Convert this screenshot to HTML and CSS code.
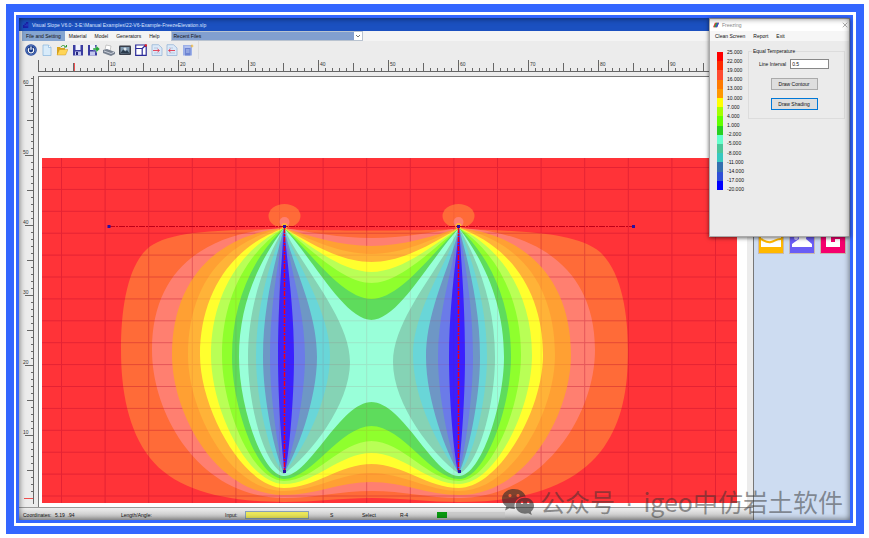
FILE: index.html
```
<!DOCTYPE html>
<html lang="en">
  <head>
    <meta charset="UTF-8" />
    <meta name="viewport" content="width=device-width, initial-scale=1.0" />
    <title>Visual Slope V6.0</title>
    <link rel="stylesheet" href="styles.css">
  </head>
  <body>
    <div class="frame">
      <div class="window">
        <header class="titlebar">
          <svg class="app-icon" viewBox="0 0 8 8"><path d="M0 8V4h2V2h2V0h3v8z" fill="#1a1fa8" /><path d="M4 3h3M2 5h5" stroke="#2b45c8" /></svg>
          <span>Visual Slope V6.0- 3-E:\Manual Examples\22-V6-Example-FreezeElevation.slp</span>
        </header>

        <div class="columns">
          <main class="main">
            <nav class="menubar">
              <button class="menu-item active">File and Setting</button>
              <button class="menu-item">Material</button>
              <button class="menu-item">Model</button>
              <button class="menu-item">Generators</button>
              <button class="menu-item">Help</button>
              <div class="recent">
                <select aria-label="Recent Files"><option>Recent Files</option></select>
                <svg viewBox="0 0 8 8"><path d="M2 3l2 2 2-2" fill="none" stroke="#777" /></svg>
              </div>
            </nav>

            <div class="toolbar">
              <button aria-label="Power"><svg viewBox="0 0 12 12"><circle cx="6" cy="6" r="5.8" fill="#24469c" /><circle cx="6" cy="6" r="4.6" fill="#1b3a86" stroke="#7ea4e0" stroke-width=".5" /><path d="M4.2 4.2a2.7 2.7 0 1 0 3.6 0M6 2.6v3.2" fill="none" stroke="#fff" stroke-width="1.2" /></svg></button>
              <button aria-label="New"><svg viewBox="0 0 12 12"><path d="M2 1h5.5L10 3.500V11.500H2z" fill="#d8ebfa" stroke="#86b4dc" stroke-width=".7" /><path d="M7.500 1v2.500H10" fill="#fff" stroke="#86b4dc" stroke-width=".7" /></svg></button>
              <button aria-label="Open"><svg viewBox="0 0 12 12"><path d="M1 3h3l1 1h4v7H1z" fill="#d8a21c" /><path d="M1 11l2.500-5.500H12L9.500 11z" fill="#ffd557" stroke="#c08a10" stroke-width=".4" /><path d="M5 3c1-2 3.500-2 4.500 0M8 3h2.500V1" fill="none" stroke="#2f9a35" stroke-width="1" /></svg></button>
              <button aria-label="Save"><svg viewBox="0 0 12 12"><path d="M1 1h10v10.500H1z" fill="#3a3ca0" /><path d="M3.500 1h5v5h-5z" fill="#f0f2ff" /><path d="M3 7.500h6v4H3z" fill="#c3c8ee" /><path d="M4 8h2v3H4z" fill="#25277d" /></svg></button>
              <button aria-label="Save as"><svg viewBox="0 0 12 12"><path d="M0 1h9v10.500H0z" fill="#3a3ca0" /><path d="M2 1h5v5H2z" fill="#f0f2ff" /><path d="M2 7.500h5v4H2z" fill="#c3c8ee" /><path d="M5 4h3V1.500L12 5 8 8.500V6H5z" fill="#23a338" stroke="#fff" stroke-width=".4" /></svg></button>
              <button aria-label="Print"><svg viewBox="0 0 12 12"><path d="M3 1l5 1-1 5-5-1z" fill="#fff" stroke="#999" stroke-width=".5" /><path d="M0 6l4-1 8 3v2l-4 2-8-3z" fill="#77808f" /><path d="M1 7l7 2.500 3-1.200" fill="none" stroke="#dde2ec" stroke-width=".8" /></svg></button>
              <button aria-label="Image"><svg viewBox="0 0 12 12"><rect y="1.500" width="12" height="9.500" rx="1" fill="#3a3f4b" /><path d="M1.500 3h9v6.500h-9z" fill="#7f98ae" /><path d="M1.500 9l3-4 2 2.500L8 6l2.500 3.500z" fill="#2a3a4c" /><circle cx="6" cy="5" r="1.500" fill="#dbe5ec" /></svg></button>
              <button aria-label="Zoom extents"><svg viewBox="0 0 12 12"><path d="M.7 1h10.500v10.400H.7zM.7 4.500h6.500v7M7.200 4.500L11 1" fill="#fff" stroke="#2a2a98" stroke-width="1.200" /><circle cx="10.800" cy="1.400" r="1.200" fill="#e22" /></svg></button>
              <button aria-label="Import"><svg viewBox="0 0 12 12"><path d="M1 .7h6.500L11 4v7.500H1z" fill="#dce9f8" stroke="#8eafd4" stroke-width=".7" /><path d="M3 4h4M3 9h6" stroke="#9bb3d0" stroke-width=".6" /><path d="M2 6.500h6M6.500 5l2 1.500-2 1.500" fill="none" stroke="#e0354d" stroke-width=".9" /></svg></button>
              <button aria-label="Export"><svg viewBox="0 0 12 12"><path d="M1 .7h6.500L11 4v7.500H1z" fill="#dce9f8" stroke="#8eafd4" stroke-width=".7" /><path d="M3 4h4M3 9h6" stroke="#9bb3d0" stroke-width=".6" /><path d="M9 6.500H3M4.500 5l-2 1.500 2 1.500" fill="none" stroke="#e0354d" stroke-width=".9" /></svg></button>
              <button aria-label="Report"><svg viewBox="0 0 12 12"><path d="M1 1h9v10.500H1z" fill="#9db0e8" /><path d="M3 4h5.500v7.500H3z" fill="#6d84d2" /><path d="M2.500 3h6M4 6h3.500M4 8h3.500" stroke="#dbe5fc" stroke-width=".7" /><path d="M10 0l.6 1.400L12 2l-1.400.6L10 4l-.6-1.400L8 2l1.400-.6z" fill="#f0b93c" /></svg></button>
            </div>

            <svg class="ruler-h" aria-hidden="true">
              <defs>
                <pattern id="ticks-h" width="70" height="17" patternUnits="userSpaceOnUse">
                  <path d="M.5 1V12M35.500 4V12M7.500 9V12M14.500 9V12M21.500 9V12M28.500 9V12M42.500 9V12M49.500 9V12M56.500 9V12M63.500 9V12M0 12.500H70" stroke="#666" />
                </pattern>
              </defs>
              <rect width="100%" height="17" fill="url(#ticks-h)" />
              <path d="M36.500 4V12" stroke="#f05050" />
              <text x="72" y="7">10</text><text x="142" y="7">20</text><text x="212" y="7">30</text>
              <text x="282" y="7">40</text><text x="352" y="7">50</text><text x="422" y="7">60</text>
              <text x="492" y="7">70</text><text x="562" y="7">80</text><text x="632" y="7">90</text>
            </svg>

            <div class="workspace">
              <svg class="ruler-v" aria-hidden="true">
                <defs>
                  <pattern id="ticks-v" y="9" width="19" height="70" patternUnits="userSpaceOnUse">
                    <path d="M6 .5H14M8 35.500H14M12 7.500H14M12 14.500H14M12 21.500H14M12 28.500H14M12 42.500H14M12 49.500H14M12 56.500H14M12 63.500H14M14.500 0V70" stroke="#666" />
                  </pattern>
                </defs>
                <rect width="19" height="428" fill="url(#ticks-v)" />
                <path d="M5 422.500H14" stroke="#f05050" />
                <text x="4" y="8">60</text><text x="4" y="78">50</text><text x="4" y="148">40</text>
                <text x="4" y="218">30</text><text x="4" y="288">20</text><text x="4" y="358">10</text>
              </svg>

              <div class="canvas">
                <svg class="field" viewBox="42 158 695 345" preserveAspectRatio="none" role="img" aria-label="Temperature shading">
                  <defs>
                    <pattern id="grid" x="61" y="167" width="43.600" height="21.900" patternUnits="userSpaceOnUse">
                      <path d="M0 .5H43.600M.5 0V21.900" stroke="#b00028" stroke-width="1" />
                    </pattern>
                    <g id="half">
                      <path fill="#ffa033" d="M284 228C222 234 172 275 172 355C172 412 215 495 284 495C315 495 340 482 372 482V246C340 246 310 236 284 228" />
                      <path fill="#ffb338" d="M284 228C226 240 188 283 188 355C188 411 230 491 284 491C315 491 340 473 372 473V254C340 254 310 239 284 228" />
                      <path fill="#ffff2e" d="M284 228C230 247 200 295 200 355C200 410 244 488 284 488C315 488 340 464 372 464V262C340 262 310 243 284 228" />
                      <path fill="#b9ff56" d="M284 228C238 250 211 298 211 355C211 410 248 484 284 484C315 484 340 453 372 453V272C342 272 311 246 284 228" />
                      <path fill="#8fff2d" d="M284 228C245 254 222 300 222 355C222 408 252 481 284 481C315 481 340 441 372 441V283C343 283 312 250 284 228" />
                      <path fill="#5edc5c" d="M284 228C252 258 232 303 232 357C232 406 257 479 284 479C312 479 340 426 372 426V299C343 299 313 255 284 228" />
                      <path fill="#99ffd9" d="M284 228C258 262 239 305 239 357C239 405 262 476 284 476C310 476 340 402 372 402V320C345 320 315 262 284 228" />
                      <path fill="#85d3b5" d="M284 228C262 265 248 310 248 357C248 405 264 465 284 474C310 455 350 405 350 362C350 318 300 265 284 228" />
                      <path fill="#69d6d8" d="M284 228C268 265 256 310 256 357C256 400 270 460 284 473C303 450 330 400 330 355C330 310 295 262 284 228" />
                      <path fill="#6e97c5" d="M284 228C273 268 263 310 263 357C263 400 275 455 284 473C296 455 317 400 317 357C317 310 293 268 284 228" />
                      <path fill="#6b7be8" d="M284 228C277 268 270 310 270 357C270 400 279 455 284 473C292 455 305 400 305 357C305 310 290 268 284 228" />
                      <path fill="#3a20ff" d="M284 228C281 268 278 310 278 357C278 400 282 455 285 472C289 455 294 400 294 357C294 310 288 268 284 228" />
                      <ellipse cx="284.500" cy="216" rx="16" ry="12" fill="#ff6b38" />
                      <circle cx="284.500" cy="222" r="5" fill="#ff7f70" />
                      <circle cx="284.500" cy="226" r="3" fill="#ffb338" />
                    </g>
                  </defs>
                  <rect x="42" y="158" width="695" height="345" fill="#ff3338" />
                  <path fill="#ff6b38" d="M284 229C215 230 165 231 146 250S121 310 121 350C121 390 128 430 150 458C175 490 225 502 284 502C315 502 340 498 372 498C403 498 428 502 459 502C520 502 575 488 604 447C622 421 628 390 628 350C628 315 622 272 600 252C576 232 520 231 459 229C420 231 320 231 284 229" />
                  <path fill="#ff7f70" d="M284 228C215 231 152 262 152 350C152 415 200 498 284 498C315 498 340 491 372 491C403 491 428 498 459 498C543 498 595 415 595 350C595 262 528 231 459 228C433 232 403 238 372 238C340 238 310 232 284 228" />
                  <rect x="42" y="158" width="695" height="345" fill="url(#grid)" opacity=".25" />
                  <use href="#half" />
                  <use href="#half" transform="matrix(-1 0 0 1 743 0)" />
                  <rect x="42" y="158" width="695" height="345" fill="url(#grid)" opacity=".1" />
                  <path d="M109 226.500H634" stroke="#c00018" stroke-dasharray="6 1 2 1" />
                  <path d="M284.500 228V472M458.500 228V472" stroke="#f00018" stroke-width="1.500" stroke-dasharray="5 1 2 1" />
                  <path d="M107.500 225h3v3h-3zM632 225h3v3h-3zM283 225h3v3h-3zM457 225h3v3h-3zM283 470h3v3h-3zM458 470h3v3h-3z" fill="#2b10a0" />
                </svg>
              </div>
            </div>

            <footer class="status">
              <span>Coordinates:</span>
              <span>5.19&nbsp; .94</span>
              <span>Length/Angle:</span>
              <label for="cmd">Input:</label>
              <input id="cmd" type="text" class="cmd">
              <span>S</span>
              <span>Select</span>
              <span>R-4</span>
              <div class="progress"><div class="bar"></div></div>
            </footer>
          </main>

          <aside class="side">
            <button class="tile yellow" aria-label="Slope"><svg viewBox="0 0 24 24"><path d="M2 3h20v15H2z" fill="#fff" /><path d="M2 10c4 2 6 4 10 3s5-3 10-3" fill="none" stroke="#ffb800" stroke-width="2" /></svg></button>
            <button class="tile violet" aria-label="Pile"><svg viewBox="0 0 24 24"><path d="M8 3h9l-1 7 6 5v3H2v-3l7-5z" fill="#fff" /><circle cx="6" cy="9" r="2" fill="#c9c3ff" /></svg></button>
            <button class="tile pink" aria-label="Wall"><svg viewBox="0 0 24 24"><path d="M5 3h5v10h4v-3h5v8H5z" fill="#fff" /></svg></button>
          </aside>
        </div>

        <section class="dialog" aria-label="Freezing">
          <div class="dialog-title">
            <svg viewBox="0 0 8 8"><path d="M2.500 1H8L5.500 7H0z" fill="#e33" /><path d="M4 1h2L3.500 7h-2z" fill="#2aa84a" /><path d="M6 1h2L5.500 7h-2z" fill="#2257d8" /></svg>
            <span>Freezing</span>
            <button class="close" aria-label="Close"><svg viewBox="0 0 8 8"><path d="M1 1l6 6M7 1L1 7" stroke="#777" stroke-width=".8" /></svg></button>
          </div>
          <nav class="dialog-menu">
            <button>Clean Screen</button>
            <button>Report</button>
            <button>Exit</button>
          </nav>
          <div class="dialog-body">
            <div class="legend-bar">
              <i class="c1"></i><i class="c2"></i><i class="c3"></i><i class="c4"></i><i class="c5"></i>
              <i class="c6"></i><i class="c7"></i><i class="c8"></i><i class="c9"></i><i class="c10"></i>
              <i class="c11"></i><i class="c12"></i><i class="c13"></i><i class="c14"></i><i class="c15"></i>
            </div>
            <ul class="legend-labels">
              <li>25.000</li><li>22.000</li><li>19.000</li><li>16.000</li>
              <li>13.000</li><li>10.000</li><li>7.000</li><li>4.000</li>
              <li>1.000</li><li>-2.000</li><li>-5.000</li><li>-8.000</li>
              <li>-11.000</li><li>-14.000</li><li>-17.000</li><li>-20.000</li>
            </ul>
            <fieldset class="group">
              <legend>Equal Temperature</legend>
              <div class="field-row">
                <label for="interval">Line Interval</label>
                <input id="interval" type="text" value="0.5">
              </div>
              <button class="btn">Draw Contour</button>
              <button class="btn focused">Draw Shading</button>
            </fieldset>
          </div>
        </section>
      </div>
    </div>

    <div class="watermark">
      <svg viewBox="0 0 32 26"><path fill-rule="evenodd" d="M12 0C5 0 0 4.500 0 10c0 3 1.700 5.700 4.300 7.500L3 21.500l4.500-2.300c1.400.4 3 .7 4.500.7h1C11 13 16 7.500 23.700 7.500C22.500 3 17.700 0 12 0zM8 5a1.600 1.600 0 1 1 0 3.200A1.600 1.600 0 0 1 8 5zm8 0a1.600 1.600 0 1 1 0 3.200A1.600 1.600 0 0 1 16 5z" /><path fill-rule="evenodd" d="M23 8.700c-5.300 0-9.300 3.500-9.300 8s4 8 9.300 8c1.200 0 2.300-.2 3.300-.5l3.500 1.800-1-3.200c2-1.500 3.200-3.700 3.200-6.100 0-4.500-4-8-9-8zM20 12.500a1.300 1.300 0 1 1 0 2.600 1.300 1.300 0 0 1 0-2.600zm6.200 0a1.300 1.300 0 1 1 0 2.600 1.300 1.300 0 0 1 0-2.600z" /></svg>
      <p><span>公众号</span><span class="dot">·</span><span>igeo中仿岩土软件</span></p>
    </div>
  </body>
</html>
```
FILE: styles.css
```
* {
  box-sizing: border-box;
}
body {
  margin: 0;
  padding: 4px 5px 4px 6px;
  height: 100vh;
  background: #fff;
  font-family: "Liberation Sans", Arial, sans-serif;
  font-size: 5px;
  line-height: 8px;
  color: #111;
}
button,
input,
select {
  font: inherit;
  color: inherit;
  margin: 0;
  padding: 0;
  border: 0;
  background: none;
}
svg {
  display: block;
}
.frame {
  height: 100%;
  border: 8px solid #3366ff;
  padding: 3px 3px 3px 2px;
}
.window {
  position: relative;
  height: 100%;
  border: 3px solid #3366ff;
  display: flex;
  flex-direction: column;
}
.window::after {
  content: "";
  position: absolute;
  inset: 0;
  box-shadow: inset 0 0 6px rgba(0, 0, 0, 0.6);
  pointer-events: none;
}
.titlebar {
  display: flex;
  align-items: center;
  gap: 3px;
  height: 13px;
  padding-left: 4px;
  background: #1b50c0;
  color: #dbe6ff;
}
.app-icon {
  width: 6px;
  height: 8px;
}
.columns {
  flex: 1;
  min-height: 0;
  display: flex;
}
.main {
  flex: 1;
  min-width: 0;
  display: flex;
  flex-direction: column;
  background: #ececec;
}

/* menu and tools */
.menubar {
  display: flex;
  height: 10px;
  padding-left: 3px;
  background: #f4f4f4;
}
.menu-item {
  padding: 0 4px;
}
.menu-item.active {
  background: #86a5d0;
}
.recent {
  display: flex;
  width: 192px;
  margin-left: 8px;
  border: 1px solid #b9c3d0;
  background: #fff;
}
.recent select {
  flex: 1;
  appearance: none;
  padding-left: 1px;
  line-height: 8px;
  background: #829fcf;
}
.recent svg {
  width: 8px;
  height: 8px;
}
.toolbar {
  display: grid;
  grid-template-columns: repeat(11, 1fr);
  align-items: center;
  justify-items: center;
  width: 180px;
  height: 18px;
  padding: 0 2px 0 4px;
  border-right: 1px solid #ddd;
}
.toolbar svg {
  width: 12px;
  height: 12px;
}

/* rulers and drawing area */
.ruler-h {
  width: calc(100% - 19px);
  height: 17px;
  margin-left: 19px;
}
.ruler-h text,
.ruler-v text {
  fill: #333;
}
.workspace {
  flex: 1;
  min-height: 0;
  display: flex;
}
.ruler-v {
  width: 19px;
  height: 100%;
}
.canvas {
  flex: 1;
  min-width: 0;
  display: flex;
  margin-right: 6px;
  padding: 81px 10px 4px 3px;
  border-left: 1px solid #777;
  border-top: 1px solid #777;
  background: #fff;
}
.field {
  width: 100%;
  height: 100%;
}

/* status bar */
.status {
  display: grid;
  grid-template-columns: 32px 66px 104px 20px 85px 32px 38px 37px 68px;
  align-items: center;
  height: 13px;
  padding: 2px 0 0 4px;
  border-top: 1px solid #999;
  background: linear-gradient(#eee, #bbb);
}
.status span {
  white-space: nowrap;
}
.cmd {
  width: 64px;
  height: 8px;
  border: 1px solid #88a0b8;
  background: #ece85a;
}
.progress {
  height: 6px;
  background: #ccc;
}
.bar {
  width: 10px;
  height: 6px;
  background: #0a9a10;
}

/* right panel */
.side {
  display: flex;
  justify-content: space-between;
  align-items: flex-start;
  width: 97px;
  padding: 196px 4px 0;
  border-left: 1px solid #777;
  background: #cddcf1;
}
.tile {
  width: 26px;
  height: 27px;
  border: 1px solid #c9b9b0;
}
.yellow {
  background: #ffb800;
}
.violet {
  background: #6a5df5;
}
.pink {
  background: #f5006e;
}

/* freezing dialog */
.dialog {
  position: absolute;
  top: 0;
  right: 0;
  width: 141px;
  height: 219px;
  background: #ebebeb;
  border: 1px solid #aaa;
  box-shadow: 0 1px 4px rgba(0, 0, 0, 0.6);
}
.dialog-title {
  display: flex;
  align-items: center;
  gap: 3px;
  height: 12px;
  padding: 0 1px 0 3px;
  background: #fff;
  color: #888;
}
.dialog-title svg {
  width: 6px;
  height: 6px;
}
.close {
  margin-left: auto;
}
.dialog-menu {
  display: flex;
  gap: 8px;
  height: 10px;
  padding-left: 5px;
  background: #f6f6f6;
}
.dialog-body {
  display: flex;
  padding: 6px 4px 0 7px;
}
.legend-bar {
  display: grid;
  grid-auto-rows: 1fr;
  width: 6px;
  height: 138px;
  margin-top: 5px;
}
.legend-labels {
  display: grid;
  grid-auto-rows: 1fr;
  align-items: center;
  width: 25px;
  height: 147px;
  margin: 0;
  padding: 0 0 0 4px;
  list-style: none;
}
.c1 { background: #ff0000; }
.c2 { background: #ff2a00; }
.c3 { background: #ff4a30; }
.c4 { background: #ff7a00; }
.c5 { background: #ff9800; }
.c6 { background: #ffff00; }
.c7 { background: #a4ff00; }
.c8 { background: #62ff00; }
.c9 { background: #28d020; }
.c10 { background: #66ffcc; }
.c11 { background: #4cc79a; }
.c12 { background: #38c8c0; }
.c13 { background: #3470b0; }
.c14 { background: #3050d8; }
.c15 { background: #0000ff; }
.group {
  flex: 1;
  min-width: 0;
  display: flex;
  flex-direction: column;
  align-items: center;
  height: 72px;
  margin: 0;
  padding: 4px 5px 0 0;
  border: 1px solid #dcdcdc;
}
.group legend {
  margin-left: 3px;
  padding: 0 1px;
}
.field-row {
  display: flex;
  align-items: center;
  gap: 4px;
  margin-bottom: 9px;
}
.field-row input {
  width: 39px;
  height: 10px;
  padding-left: 1px;
  border: 1px solid #888;
  background: #fff;
}
.btn {
  width: 47px;
  height: 12px;
  margin-bottom: 8px;
  border: 1px solid #aaa;
  background: #dedede;
}
.btn.focused {
  border-color: #0078d7;
}

.watermark {
  position: absolute;
  right: 26px;
  bottom: 19px;
  display: flex;
  align-items: center;
  gap: 6px;
  font-family: "Noto Sans CJK SC", sans-serif;
  font-size: 25px;
  line-height: 32px;
  color: rgba(50, 50, 50, 0.5);
  white-space: nowrap;
}
.watermark p {
  margin: 0;
}
.watermark .dot {
  padding: 0 10px;
  font-family: "Liberation Sans", sans-serif;
}
.watermark svg {
  width: 32px;
  height: 26px;
  fill: rgba(40, 40, 40, 0.6);
}
```
